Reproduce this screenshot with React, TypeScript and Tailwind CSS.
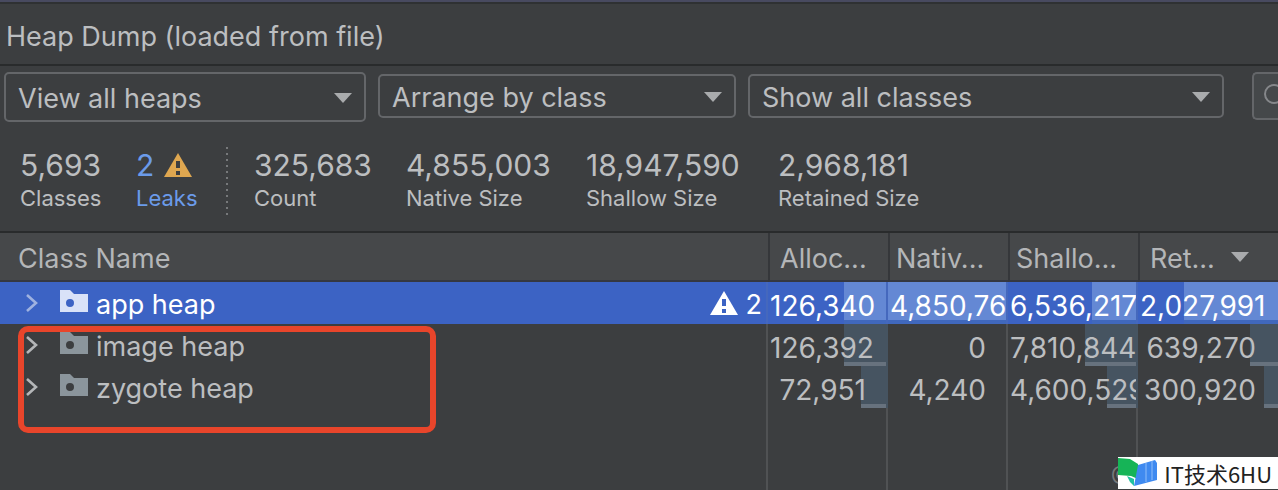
import { useState } from 'react'
import clsx from 'clsx'

type Cell = { value: string; bar: number }

type HeapRow = {
  name: string
  leaks?: number
  cells: Cell[]
}

const filters = [
  { label: 'Heap', value: 'View all heaps', grow: 'flex-[362] h-[50px]' },
  { label: 'Arrangement', value: 'Arrange by class', grow: 'flex-[358] h-11 mt-0.5' },
  { label: 'Class filter', value: 'Show all classes', grow: 'flex-[476] h-11 mt-0.5' },
]

const totals = [
  { value: '325,683', label: 'Count', width: 'w-[152px]' },
  { value: '4,855,003', label: 'Native Size', width: 'w-[180px]' },
  { value: '18,947,590', label: 'Shallow Size', width: 'w-[192px]' },
  { value: '2,968,181', label: 'Retained Size', width: 'w-[180px]' },
]

const rows: HeapRow[] = [
  {
    name: 'app heap',
    leaks: 2,
    cells: [
      { value: '126,340', bar: 36 },
      { value: '4,850,763', bar: 100 },
      { value: '6,536,217', bar: 34 },
      { value: '2,027,991', bar: 67 },
    ],
  },
  {
    name: 'image heap',
    cells: [
      { value: '126,392', bar: 36 },
      { value: '0', bar: 0 },
      { value: '7,810,844', bar: 40 },
      { value: '639,270', bar: 20 },
    ],
  },
  {
    name: 'zygote heap',
    cells: [
      { value: '72,951', bar: 21 },
      { value: '4,240', bar: 0 },
      { value: '4,600,529', bar: 23 },
      { value: '300,920', bar: 10 },
    ],
  },
]

function DownArrow({ className }: { className?: string }) {
  return (
    <svg viewBox="0 0 18 10" className={clsx('h-2.5 w-[18px] fill-[#a9abad]', className)} aria-hidden="true">
      <path d="M0 0h18L9 10z" />
    </svg>
  )
}

function WarningIcon({ className, mark }: { className?: string; mark: string }) {
  return (
    <svg viewBox="0 0 28 24" className={clsx('h-6 w-7', className)} aria-hidden="true">
      <path d="M14 0l14 24H0z" />
      <path d="M12 8h4v7h-4zM12 18h4v4h-4z" fill={mark} />
    </svg>
  )
}

function FolderIcon({ selected }: { selected: boolean }) {
  return (
    <svg viewBox="0 0 28 22" className="mb-1 h-[22px] w-7 shrink-0" aria-hidden="true">
      <path
        d="M0 0h10l4 4h14v18H0zM10 9a4 4 0 1 0 0 8a4 4 0 0 0 0-8z"
        fillRule="evenodd"
        fill={selected ? '#d9e2f8' : '#8b959c'}
      />
    </svg>
  )
}

function Toolbar() {
  return (
    <div className="flex items-start gap-3 pt-1.5 pl-1">
      {filters.map((filter) => (
        <div key={filter.label} className={clsx('grid min-w-0 items-center', filter.grow)}>
          <select
            aria-label={filter.label}
            className="col-start-1 row-start-1 h-full w-full appearance-none rounded-[5px] border-2 border-[#646669] bg-[#3c3e40] pt-1 pl-3 text-[#bcbec0]"
          >
            <option>{filter.value}</option>
          </select>
          <DownArrow className="pointer-events-none col-start-1 row-start-1 mt-0.5 mr-3.5 justify-self-end" />
        </div>
      ))}
      <label className="ml-4 flex h-12 w-[26px] shrink-0 items-center overflow-hidden rounded-l-[5px] border-2 border-r-0 border-[#646669] bg-[#45484a] pl-2.5">
        <svg viewBox="0 0 26 26" className="mb-1 h-[26px] w-[26px] shrink-0" fill="none" stroke="#85878a" strokeWidth="2" aria-hidden="true">
          <circle cx="10" cy="13" r="9" />
          <path d="M17 19l6 6" />
        </svg>
        <input type="search" aria-label="Search classes" className="w-0 min-w-0 bg-transparent" />
      </label>
    </div>
  )
}

function Summary() {
  return (
    <div className="flex h-[109px] items-start pt-[25px] pl-5 text-[30px] leading-9">
      <div className="w-[116px]">
        <div>5,693</div>
        <div className="text-[22px] leading-[30px]">Classes</div>
      </div>
      <a href="#leaks" className="w-[90px] text-[#6b9bea]">
        <div className="flex items-center gap-2.5">
          2
          <WarningIcon className="fill-[#dfa750]" mark="#3c3e40" />
        </div>
        <div className="text-[22px] leading-[30px]">Leaks</div>
      </a>
      <div className="mr-[26px] h-[68px] w-0.5 bg-[repeating-linear-gradient(to_bottom,#77797b_0_2px,transparent_2px_6px)]" />
      {totals.map((total) => (
        <div key={total.label} className={total.width}>
          <div>{total.value}</div>
          <div className="text-[22px] leading-[30px]">{total.label}</div>
        </div>
      ))}
    </div>
  )
}

function HeapTable() {
  const [selected, setSelected] = useState('app heap')

  return (
    <div className="relative grid flex-1 border-t-2 border-[#292b2c]">
      <table className="w-full table-fixed border-separate border-spacing-0 text-left">
        <colgroup>
          <col />
          <col className="w-[120px]" />
          <col className="w-[120px]" />
          <col className="w-[130px]" />
          <col className="w-[140px]" />
        </colgroup>
        <thead>
          <tr className="h-[49px] bg-[#46484a] text-[#b4b6b8]">
            <th className="border-b-2 border-[#353841] p-0 pt-1 pl-[18px] font-normal">Class Name</th>
            {['Alloc...', 'Nativ...', 'Shallo...'].map((title) => (
              <th
                key={title}
                className={clsx(
                  'border-b-2 border-l-2 border-b-[#353841] border-l-[#35373a] p-0 pt-1 font-normal',
                  title === 'Alloc...' ? 'pl-2.5' : 'pl-1.5',
                )}
              >
                {title}
              </th>
            ))}
            <th className="border-b-2 border-l-2 border-b-[#353841] border-l-[#35373a] p-0 pt-1 pl-2.5 font-normal">
              <button type="button" className="flex items-center gap-4">
                Ret...
                <DownArrow className="mb-1" />
              </button>
            </th>
          </tr>
        </thead>
        <tbody>
          {rows.map((row) => {
            const active = row.name === selected
            return (
              <tr
                key={row.name}
                onClick={() => setSelected(row.name)}
                className={clsx('h-[42px]', active ? 'bg-[#3c63c4] text-white' : 'text-[#bcbec0]')}
              >
                <td className={clsx('border-r-2 p-0', active ? 'border-[#4568bd]' : 'border-[#505254]')}>
                  <div className="flex h-[42px] items-center pr-1 pl-[26px]">
                    <button type="button" aria-label={`Expand ${row.name}`} className="mr-[22px]">
                      <svg viewBox="0 0 12 18" className="h-[18px] w-3" fill="none" stroke={active ? '#9fb2e0' : '#b4b6b8'} strokeWidth="2.6" aria-hidden="true">
                        <path d="M1 1l9 8l-9 8" />
                      </svg>
                    </button>
                    <FolderIcon selected={active} />
                    <span className="ml-2 flex-1 pt-1">{row.name}</span>
                    {row.leaks && (
                      <span className="flex items-center gap-2 pt-1">
                        <WarningIcon className="mb-1 fill-white" mark="#3c63c4" />
                        {row.leaks}
                      </span>
                    )}
                  </div>
                </td>
                {row.cells.map((cell, i) => (
                  <td
                    key={i}
                    className={clsx(
                      'p-0 text-[28px]',
                      i < row.cells.length - 1 && 'border-r-2',
                      active ? 'border-[#4568bd]' : cell.bar > 0 ? 'border-[#465461]' : 'border-[#505254]',
                    )}
                  >
                    <div className="grid h-[42px] items-center overflow-hidden">
                      <div
                        className={clsx(
                          'col-start-1 row-start-1 h-full justify-self-end border-b-4',
                          active ? 'border-[#4068bd] bg-[#6488d4]' : 'border-[#67727e] bg-[#465461]',
                          cell.bar === 0 && 'hidden',
                        )}
                        style={{ width: `${cell.bar}%` }}
                      />
                      <span
                        className={clsx(
                          'col-start-1 row-start-1 min-w-0 pt-1.5 pl-0.5 text-right whitespace-nowrap',
                          i < row.cells.length - 1 ? 'pr-5' : 'pr-[22px]',
                        )}
                      >
                        {cell.value}
                      </span>
                    </div>
                  </td>
                ))}
              </tr>
            )
          })}
          <tr>
            <td className="border-r-2 border-[#505254]" />
            <td className="border-r-2 border-[#505254]" />
            <td className="border-r-2 border-[#505254]" />
            <td className="border-r-2 border-[#505254]" />
            <td />
          </tr>
        </tbody>
      </table>
      <div className="pointer-events-none absolute top-[93px] left-[18px] h-[107px] w-[418px] rounded-[10px] border-[6px] border-[#e8452b]" />
    </div>
  )
}

function Watermark() {
  return (
    <div className="absolute right-0 bottom-px flex items-center">
      <span className="-mr-3 text-xl text-[#77797b]">@</span>
      <div className="relative flex h-8 items-center bg-white pr-1.5 font-['Noto_Sans_CJK_SC',sans-serif] text-[22px] leading-8 text-[#222]">
        <svg viewBox="0 0 46 32" className="h-8 w-[46px]" aria-hidden="true">
          <path d="M0 1l12 1l8 5v15l-7-3l-13-1z" fill="#16b457" />
          <path d="M9 19l7 3v7l-4-4z" fill="#22c1a0" />
          <path d="M20 8l17-5l2 3v17l-23 6z" fill="#3f8af0" />
          <path d="M28 6v19M34 4v19" stroke="#67a4f5" strokeWidth="2" />
        </svg>
        IT技术6HU
      </div>
    </div>
  )
}

export default function App() {
  return (
    <div className="relative flex min-h-screen flex-col overflow-hidden bg-[#3c3e40] font-[Inter,sans-serif] text-[27px] leading-8 text-[#bcbec0]">
      <div className="h-1 border-b-2 border-[#2f3133] bg-[#484a60]" />
      <h1 className="border-b-2 border-[#292b2c] pt-[18px] pb-3 pl-1.5 leading-[30px]">Heap Dump (loaded from file)</h1>
      <Toolbar />
      <Summary />
      <HeapTable />
      <Watermark />
    </div>
  )
}
